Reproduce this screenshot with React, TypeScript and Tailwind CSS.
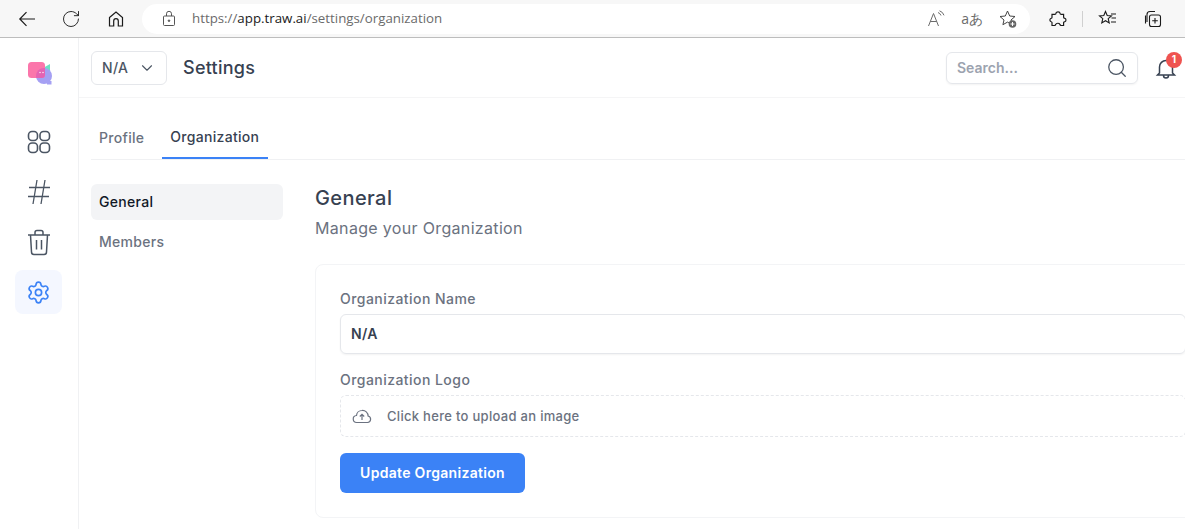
import { ChevronDown, RotateCw, Search, Settings } from 'lucide-react'

const FONT = "font-['Inter','Noto_Sans',sans-serif]"

function BrowserBar() {
  return (
    <div className="h-[38px] shrink-0 flex items-center bg-[#f7f7f7] border-b border-[#bdbdbd] font-['Open_Sans',sans-serif]">
      <div className="w-[142px] shrink-0 flex items-center pl-[17px] text-[#1a1a1a]">
        <svg width="20" height="20" viewBox="0 0 20 20" fill="none" stroke="currentColor" strokeWidth="1.2">
          <path d="M18 10H3M9.500 3.200 2.800 10l6.700 6.800" />
        </svg>
        <RotateCw size={20} strokeWidth={1.1} className="ml-[24px]" />
        <svg className="ml-[26px]" width="18" height="18" viewBox="0 0 18 18" fill="none" stroke="currentColor" strokeWidth="1.2">
          <path d="M2.500 7.500 9 2l6.500 5.500V16h-4.200v-5a2.300 2.300 0 0 0-4.600 0v5H2.500z" />
        </svg>
      </div>
      <div className="w-[888px] h-[30px] shrink-0 bg-white rounded-full flex items-center pl-[20px] pr-[12px]">
        <svg width="14" height="17" viewBox="0 0 14 17" fill="none" stroke="#555" strokeWidth="1">
          <rect x="1.500" y="6" width="11" height="9.500" rx="1" />
          <path d="M4.500 6V3.800a2.500 2.500 0 0 1 5 0V6" />
          <circle cx="7" cy="10.700" r="0.800" fill="#555" />
        </svg>
        <span className="ml-[16px] text-[13.300px] text-[#6b6b6b]">
          https://<span className="text-[#1a1a1a]">app.traw.ai</span>/settings/organization
        </span>
        <div className="ml-auto flex items-center gap-[15px] text-[#6b6b6b]">
          <svg width="19" height="18" viewBox="0 0 19 18" fill="none" stroke="#6b6b6b" strokeWidth="1">
            <path d="M1.500 16 6.500 3.500 11.500 16M3.300 11.500h6.400M11 2.500a5 5 0 0 1 3 3M12.500 0.800a7 7 0 0 1 4.500 4.500" />
          </svg>
          <span className="text-[14px] leading-none">aあ</span>
          <svg width="20" height="20" viewBox="0 0 20 20" fill="none" stroke="#444" strokeWidth="1">
            <path d="m9.500 2 2.200 5 5.300.5-4 3.500 1.100 4.700-4.600-2.600-4.600 2.600 1.100-4.700-4-3.500 5.300-.5z" />
            <circle cx="14.500" cy="15" r="3.800" fill="#666" stroke="none" />
            <path d="M14.500 13v4M12.500 15h4" stroke="#fff" />
          </svg>
        </div>
      </div>
      <div className="flex-1 flex items-center pl-[19px] text-[#1a1a1a]">
        <svg width="18" height="18" viewBox="0 0 18 18" fill="none" stroke="currentColor" strokeWidth="1.200">
          <path d="M7 3.200C7 1.500 11 1.500 11 3.200c0 1 .6 1.200 1.300 1.200h2.300v2.900c0 .7.700 1 1.300 1 1.400.2 1.400 3.200 0 3.400-.6 0-1.300.3-1.300 1v2.800h-2.600c-.8 0-1-.6-1.200-1.200-.4-1.400-3.700-1.400-4 0-.2.6-.5 1.200-1.200 1.200H3v-3c0-.6-.6-.8-1.200-1-1.200-.5-1.200-2.500 0-3 .6-.2 1.200-.4 1.200-1V4.400h2.700C6.400 4.400 7 4.200 7 3.200z" />
        </svg>
        <div className="ml-[15px] w-px h-[16px] bg-[#d0d0d0]" />
        <svg className="ml-[15px]" width="20" height="20" viewBox="0 0 20 20" fill="none" stroke="currentColor" strokeWidth="1.100">
          <path d="m7.500 2.500 1.700 4 4.300.4-3.300 2.800 1 4.200-3.700-2.200-3.700 2.200 1-4.200L1.500 6.900l4.300-.4zM13 5h5M13.500 9H18M13 13h5" />
        </svg>
        <svg className="ml-[25px]" width="20" height="20" viewBox="0 0 20 20" fill="none" stroke="currentColor" strokeWidth="1.100">
          <path d="M4 13V5.500A3 3 0 0 1 7 2.500h5M2.500 6.500v8" />
          <rect x="6.500" y="6" width="11" height="11.500" rx="2" />
          <path d="M12 9v5.500M9.200 11.700h5.600" />
        </svg>
      </div>
    </div>
  )
}

function Sidebar() {
  return (
    <aside className="w-[79px] shrink-0 border-r border-[#f0f1f3] flex flex-col items-center text-[#4b5563]">
      <svg className="mt-[23px] ml-[2px]" width="24" height="24" viewBox="0 0 24 24">
        <defs>
          <clipPath id="logo-pink">
            <rect x="0" y="1" width="17" height="16" rx="3.500" />
          </clipPath>
        </defs>
        <path d="M22 3v9l-7-5z" fill="#6ee0c4" />
        <circle cx="16" cy="15" r="8" fill="#a5a0f3" />
        <path d="M19 20h4.500v3.500H19z" fill="#a5a0f3" />
        <rect x="0" y="1" width="17" height="16" rx="3.500" fill="#fb76ab" />
        <circle cx="16" cy="15" r="8" fill="#e463b3" clipPath="url(#logo-pink)" />
        <circle cx="12" cy="11.500" r="0.700" fill="#fff" />
        <circle cx="15" cy="11.500" r="0.700" fill="#fff" />
      </svg>
      <svg className="mt-[45px]" width="24" height="24" viewBox="0 0 24 24" fill="none" stroke="currentColor" strokeWidth="1.600">
        <rect x="1.500" y="1.500" width="9" height="9" rx="3.500" />
        <rect x="13" y="1.500" width="9.500" height="9" rx="3.500" />
        <rect x="1.500" y="13" width="9" height="9.500" rx="3.500" />
        <rect x="13" y="13" width="9.500" height="9.500" rx="3.500" />
      </svg>
      <svg className="mt-[25px]" width="24" height="26" viewBox="0 0 24 26" fill="none" stroke="currentColor" strokeWidth="1.300">
        <path d="M10 1 6 25M18 1l-4 24M2 8.500h21M1 17.500h21" />
      </svg>
      <svg className="mt-[24px]" width="24" height="27" viewBox="0 0 24 27" fill="none" stroke="currentColor" strokeWidth="1.500">
        <path d="M1 6h22M8 5.500V3.500A2 2 0 0 1 10 1.500h4a2 2 0 0 1 2 2v2M3.500 6l1 17a2.500 2.500 0 0 0 2.500 2.500h10a2.500 2.500 0 0 0 2.500-2.500l1-17M9.500 11v9.500M14.500 11v9.500" />
      </svg>
      <div className="mt-[14px] mr-[2px] w-[47px] h-[44px] rounded-lg bg-[#f4f7ff] flex items-center justify-center text-[#3b82f6]">
        <Settings size={25} strokeWidth={1.600} />
      </div>
    </aside>
  )
}

function Header() {
  return (
    <header className="h-[60px] shrink-0 border-b border-[#f5f5f6] flex items-center pl-[12px] pr-[7px]">
      <button className="w-[76px] h-[34px] rounded-md border border-[#e5e7eb] flex items-center pl-[10px] text-[14px] font-medium tracking-[0.3px] text-[#4b5563]">
        N/A
        <ChevronDown size={18} strokeWidth={1.500} className="ml-[10px]" />
      </button>
      <h1 className="ml-[16px] text-[18px] font-medium tracking-[0.25px] text-[#374151]">Settings</h1>
      <div className="ml-auto w-[192px] h-[32px] rounded-md border border-[#e5e7eb] shadow-xs flex items-center pl-[10px] pr-[9px] text-[14px] font-semibold text-[#9ca3af]">
        Search...
        <Search size={22} strokeWidth={1.400} className="ml-auto text-[#4b5563]" />
      </div>
      <div className="relative ml-[16px] w-[24px] h-[24px] text-[#374151]">
        <svg width="24" height="24" viewBox="0 0 24 24" fill="none" stroke="currentColor" strokeWidth="1.500">
          <path d="M5.500 17V11a6.500 6.500 0 0 1 13 0v6l2 2h-17zM9.500 19.500a2.500 2.500 0 0 0 5 0" />
        </svg>
        <span className="absolute -top-[4px] -right-[4px] w-[16px] h-[16px] rounded-full bg-[#ef5350] text-white text-[10px] font-bold flex items-center justify-center">
          1
        </span>
      </div>
    </header>
  )
}

export default function App() {
  return (
    <div className={`w-[1185px] h-[529px] overflow-hidden bg-white flex flex-col ${FONT}`}>
      <BrowserBar />
      <div className="flex-1 flex min-h-0">
        <Sidebar />
        <main className="flex-1 min-w-0">
          <Header />
          <nav className="h-[62px] ml-[12px] flex items-end border-b border-[#f0f1f3] text-[14px] font-medium tracking-[0.3px]">
            <a className="px-[8px] h-[44px] flex items-center text-[#6b7280]">Profile</a>
            <a className="ml-[10px] w-[106px] h-[44px] pl-[8px] flex items-center text-[#374151] border-b-2 border-[#3b82f6]">
              Organization
            </a>
          </nav>
          <div className="flex ml-[12px] mt-[24px]">
            <div className="w-[192px] shrink-0 flex flex-col gap-[4px] text-[14px] font-medium tracking-[0.3px]">
              <a className="h-[36px] pl-[8px] pb-[1px] flex items-center rounded-md bg-[#f3f4f6] text-[#111827]">General</a>
              <a className="h-[36px] pl-[8px] pb-[1px] flex items-center text-[#6b7280]">Members</a>
            </div>
            <section className="ml-[32px] w-[900px] shrink-0">
              <h2 className="text-[20px] leading-[28px] font-medium tracking-[0.4px] text-[#374151]">General</h2>
              <p className="mt-[4px] text-[16px] leading-[24px] tracking-[0.33px] text-[#6b7280]">Manage your Organization</p>
              <div className="mt-[24px] h-[254px] rounded-lg border border-[#f3f4f6] pl-[24px] pt-[24px]">
                <label className="block text-[14px] leading-[20px] font-medium tracking-[0.45px] text-[#6b7280]">
                  Organization Name
                </label>
                <div className="mt-[5px] w-[846px] h-[40px] rounded-md border border-[#e5e7eb] shadow-xs flex items-center pl-[10px] pb-[1px] text-[14px] font-semibold tracking-[0.3px] text-[#374151]">
                  N/A
                </div>
                <label className="mt-[16px] block text-[14px] leading-[20px] font-medium tracking-[0.45px] text-[#6b7280]">
                  Organization Logo
                </label>
                <div className="mt-[5px] w-[846px] h-[42px] rounded-md border border-dashed border-[#e5e7eb] flex items-center pl-[11px] text-[13px] font-medium tracking-[0.3px] text-[#6b7280]">
                  <svg width="20" height="18" viewBox="0 0 20 18" fill="none" stroke="currentColor" strokeWidth="1.200">
                    <path d="M5 15.500h10.500a3.300 3.300 0 0 0 .6-6.500A5.500 5.500 0 0 0 10 3.500 5.500 5.500 0 0 0 4.500 8.500 3.500 3.500 0 0 0 5 15.500zM10 13V7.500M7.800 9.500 10 7.300l2.200 2.200" />
                  </svg>
                  <span className="ml-[15px] pt-[1px]">Click here to upload an image</span>
                </div>
                <button className="mt-[16px] w-[185px] h-[40px] pb-[1px] rounded-md bg-[#3b82f6] text-white text-[14px] font-semibold tracking-[0.3px]">
                  Update Organization
                </button>
              </div>
            </section>
          </div>
        </main>
      </div>
    </div>
  )
}
